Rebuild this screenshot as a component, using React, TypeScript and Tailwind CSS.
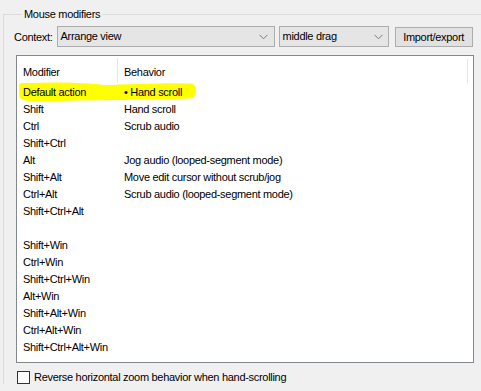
import React from "react";

const rows: [string, string][] = [
  ["Default action", "• Hand scroll"],
  ["Shift", "Hand scroll"],
  ["Ctrl", "Scrub audio"],
  ["Shift+Ctrl", ""],
  ["Alt", "Jog audio (looped-segment mode)"],
  ["Shift+Alt", "Move edit cursor without scrub/jog"],
  ["Ctrl+Alt", "Scrub audio (looped-segment mode)"],
  ["Shift+Ctrl+Alt", ""],
  ["", ""],
  ["Shift+Win", ""],
  ["Ctrl+Win", ""],
  ["Shift+Ctrl+Win", ""],
  ["Alt+Win", ""],
  ["Shift+Alt+Win", ""],
  ["Ctrl+Alt+Win", ""],
  ["Shift+Ctrl+Alt+Win", ""],
];

function Chevron() {
  return (
    <svg width="9" height="6" viewBox="0 0 9 6" className="shrink-0">
      <path d="M0.5 0.8 L4.5 4.8 L8.5 0.8" fill="none" stroke="#7a7a7a" strokeWidth="1" />
    </svg>
  );
}

export default function App() {
  return (
    <div
      className="w-[481px] h-[391px] bg-[#f0f0f0] overflow-hidden text-[11px] tracking-[-0.3px] text-black"
      style={{ fontFamily: '"Liberation Sans", Arial, sans-serif' }}
    >
      <fieldset className="mt-[7px] ml-[3px] border-t border-l border-[#dcdcdc] pl-[10px] pb-0">
        <legend className="ml-[8px] px-[2px] leading-[14px]">Mouse modifiers</legend>
        <div className="mt-[5px] flex items-center h-[21px]">
          <span className="leading-[14px]">Context:</span>
          <div className="ml-[4px] w-[218px] h-[21px] border border-[#adadad] bg-[#e5e5e5] flex items-center pl-[3px] pr-[6px]">
            <span className="flex-1">Arrange view</span>
            <Chevron />
          </div>
          <div className="ml-[4px] w-[110px] h-[21px] border border-[#adadad] bg-[#e5e5e5] flex items-center pl-[3px] pr-[5px]">
            <span className="flex-1">middle drag</span>
            <Chevron />
          </div>
          <div className="ml-[6px] w-[78px] h-[20px] mt-[1px] border border-[#adadad] bg-[#e1e1e1] flex items-center justify-center">
            Import/export
          </div>
        </div>
        <div className="mt-[8px] ml-[2px] w-[458px] h-[308px] border border-[#828790] bg-white relative">
          <svg
            className="absolute left-[1px] top-[26px]"
            width="180"
            height="21"
            viewBox="0 0 180 21"
          >
            <path
              d="M1,4 Q1,1 5,1 L40,0.6 Q70,1 84,2.8 Q92,3.8 100,2.4 L150,1.2 L173,1.6 Q178,2 178,9 Q178,16 172,16.6 L120,17.8 L60,18.6 L20,19.4 Q3,19.6 1.5,15 Z"
              fill="#ffff00"
            />
          </svg>
          <div className="relative flex h-[28px] pt-[4px] items-center">
            <div className="w-[100px] pl-[6px]">Modifier</div>
            <div className="w-px h-[24px] bg-[#e5e5e5] self-start -mt-[2px]" />
            <div className="w-[349px] pl-[6px]">Behavior</div>
            <div className="w-px h-[24px] bg-[#e5e5e5] self-start -mt-[1px]" />
          </div>
          <div className="relative">
            {rows.map(([m, b], i) => (
              <div key={i} className="flex h-[17px] items-center">
                <div className="w-[101px] pl-[6px] whitespace-nowrap">{m}</div>
                <div className="pl-[6px] whitespace-nowrap">{b}</div>
              </div>
            ))}
          </div>
        </div>
        <div className="mt-[8px] ml-[3px] flex items-center h-[13px]">
          <div className="w-[13px] h-[13px] border border-[#333333] bg-white shrink-0" />
          <span className="ml-[4px]">Reverse horizontal zoom behavior when hand-scrolling</span>
        </div>
      </fieldset>
    </div>
  );
}
